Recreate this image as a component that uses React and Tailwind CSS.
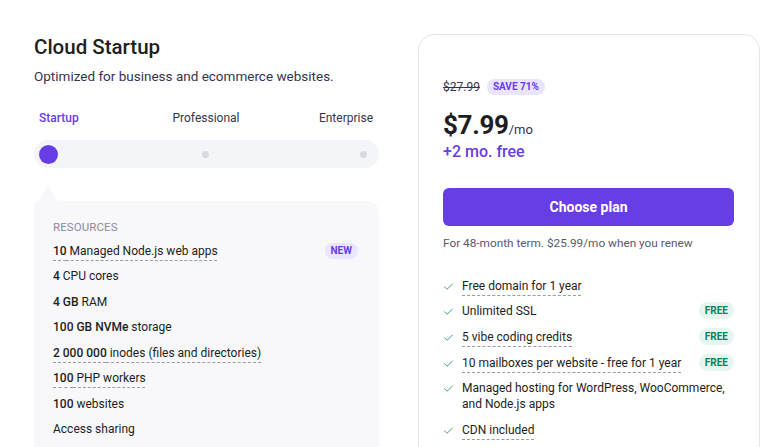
import React from "react";

const resources = [
  { bold: "10", rest: " Managed Node.js web apps", dashed: true, badge: "NEW" },
  { bold: "4", rest: " CPU cores" },
  { bold: "4 GB", rest: " RAM" },
  { bold: "100 GB NVMe", rest: " storage" },
  { bold: "2 000 000", rest: " inodes (files and directories)", dashed: true },
  { bold: "100", rest: " PHP workers", dashed: true },
  { bold: "100", rest: " websites" },
  { bold: "", rest: "Access sharing" },
];

const features = [
  { text: "Free domain for 1 year", dashed: true },
  { text: "Unlimited SSL", free: true },
  { text: "5 vibe coding credits", dashed: true, free: true },
  { text: "10 mailboxes per website - free for 1 year", dashed: true, free: true },
  { text: "Managed hosting for WordPress, WooCommerce, and Node.js apps" },
  { text: "CDN included", dashed: true },
];

function Check() {
  return (
    <svg width="11" height="11" viewBox="0 0 24 24" fill="none" stroke="#2f9a6b" strokeWidth="2" strokeLinecap="round" strokeLinejoin="round">
      <path d="M3.5 12.5l5.5 5.5L20.5 6.5" />
    </svg>
  );
}

const dash = "underline decoration-dashed decoration-[#9a9ba6] underline-offset-[5px] decoration-1";

export default function App() {
  return (
    <div className="w-[760px] h-[447px] overflow-hidden bg-white flex text-[#1d1e20]" style={{ fontFamily: "Roboto, 'Noto Sans', sans-serif" }}>
      {/* plan picker */}
      <div className="ml-[34px] w-[345px] pt-[34px] flex flex-col">
        <h1 className="text-[20.5px] leading-[26px] font-medium">Cloud Startup</h1>
        <p className="mt-[7px] text-[13.5px] leading-[18px] text-[#36344d]">Optimized for business and ecommerce websites.</p>
        <div className="mt-[25px] grid grid-cols-3 text-[12px] leading-[16px] pl-[5px] pr-[6px]">
          <span className="text-[#673de6] font-medium">Startup</span>
          <span className="text-[#36344d] text-center">Professional</span>
          <span className="text-[#36344d] text-right">Enterprise</span>
        </div>
        <div className="mt-[14px] h-[28px] rounded-full bg-[#f4f5f9] grid grid-cols-3 items-center pl-[5px] pr-[12px]">
          <span className="w-[19px] h-[19px] rounded-full bg-[#673de6]" />
          <span className="w-[7px] h-[7px] rounded-full bg-[#d9dae0] justify-self-center ml-[6px]" />
          <span className="w-[7px] h-[7px] rounded-full bg-[#d9dae0] justify-self-end" />
        </div>
        {/* resources card with pointer */}
        <div className="relative mt-[33px] flex-1 bg-[#f8f8fb] rounded-tr-[12px] rounded-tl-[4px] pl-[19px] pr-[20px] pt-[18px]">
          <div className="absolute -top-[15px] left-[3px] w-0 h-0 border-l-[11px] border-r-[11px] border-b-[16px] border-l-transparent border-r-transparent border-b-[#f8f8fb]" />
          <div className="text-[11.5px] leading-[16px] text-[#8c8d9b] tracking-[0.1px]">RESOURCES</div>
          <div className="mt-[3px] flex flex-col">
            {resources.map((r, i) => (
              <div key={i} className="h-[25.5px] flex items-center justify-between text-[12px]">
                <span className={r.dashed ? dash : ""}>
                  {r.bold && <span className="font-medium">{r.bold}</span>}
                  {r.rest}
                </span>
                {r.badge && (
                  <span className="mr-[1px] px-[6px] h-[16px] leading-[16px] rounded-full bg-[#ebe4ff] text-[#673de6] text-[10px] font-bold">{r.badge}</span>
                )}
              </div>
            ))}
          </div>
        </div>
      </div>

      {/* price card */}
      <div className="ml-[39px] mt-[34px] w-[342px] h-[440px] shrink-0 rounded-[16px] border border-[#e6e6ea] pl-[24px] pr-[25px] pt-[43px]">
        <div className="flex items-center gap-[7px]">
          <span className="text-[12px] text-[#36344d] line-through">$27.99</span>
          <span className="px-[6px] h-[16px] leading-[16px] rounded-full bg-[#ebe4ff] text-[#673de6] text-[10px] font-bold">SAVE 71%</span>
        </div>
        <div className="mt-[13px] flex items-baseline">
          <span className="text-[26px] leading-[32px] font-bold tracking-[-0.3px]">$7.99</span>
          <span className="text-[13px] text-[#36344d]">/mo</span>
        </div>
        <div className="mt-[1px] text-[16px] leading-[20px] font-medium text-[#673de6]">+2 mo. free</div>
        <button className="mt-[26px] w-full h-[38px] rounded-[6px] bg-[#673de6] text-white text-[14px] font-bold">Choose plan</button>
        <div className="mt-[9px] text-[11.8px] leading-[16px] text-[#595a6a]">For 48-month term. $25.99/mo when you renew</div>
        <div className="mt-[22px] flex flex-col">
          {features.map((f, i) => (
            <div key={i} className="flex items-start justify-between py-[4.8px] text-[12px] leading-[16px]">
              <div className="flex items-start gap-[8px]">
                <span className="mt-[3px] shrink-0"><Check /></span>
                <span className={`${f.dashed ? dash : ""} max-w-[272px]`}>{f.text}</span>
              </div>
              {f.free && (
                <span className="-mt-[1px] px-[6px] h-[17px] leading-[17px] rounded-full bg-[#e6f5ee] text-[#008361] text-[10px] font-bold">FREE</span>
              )}
            </div>
          ))}
        </div>
      </div>
    </div>
  );
}
